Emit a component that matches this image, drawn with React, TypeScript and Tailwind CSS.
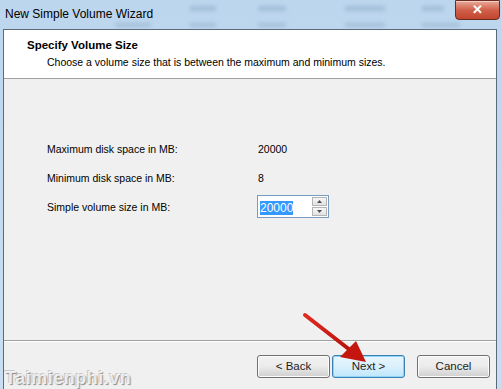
import React from 'react';

const font = { fontFamily: '"Liberation Sans", Arial, sans-serif' };

function WinButton({ label, focused }: { label: string; focused?: boolean }) {
  return (
    <button
      className={
        'w-[73px] h-[23px] rounded-[3px] border text-[11.5px] text-[#1e1e1e] bg-gradient-to-b ' +
        (focused
          ? 'border-[#3c7fb1] from-[#eaf6fd] via-[#d9f0fc] to-[#bee6fd] shadow-[inset_0_0_0_1px_#8fd4f6]'
          : 'border-[#707070] from-[#f2f2f2] via-[#ebebeb] to-[#cfcfcf] shadow-[inset_0_0_0_1px_#fcfcfc]')
      }
    >
      {label}
    </button>
  );
}

export default function App() {
  const rows = [
    { label: 'Maximum disk space in MB:', value: '20000' },
    { label: 'Minimum disk space in MB:', value: '8' },
  ];

  return (
    <div
      className="relative w-[501px] h-[389px] overflow-hidden flex flex-col bg-gradient-to-b from-[#bcd6ee] to-[#c9def2]"
      style={font}
    >
      {/* title bar */}
      <div className="relative h-[29px] flex items-start justify-between">
        <div className="absolute inset-0 blur-[2px] opacity-40">
          <div className="absolute left-[190px] top-[6px] w-[26px] h-[5px] bg-[#7a98b4]" />
          <div className="absolute left-[258px] top-[6px] w-[28px] h-[5px] bg-[#7a98b4]" />
          <div className="absolute left-[345px] top-[6px] w-[40px] h-[5px] bg-[#7a98b4]" />
          <div className="absolute left-[422px] top-[6px] w-[22px] h-[5px] bg-[#7a98b4]" />
          <div className="absolute left-[115px] top-[23px] w-[36px] h-[4px] bg-[#7a98b4]" />
          <div className="absolute left-[190px] top-[23px] w-[26px] h-[4px] bg-[#7a98b4]" />
          <div className="absolute left-[258px] top-[23px] w-[28px] h-[4px] bg-[#7a98b4]" />
          <div className="absolute left-[345px] top-[23px] w-[40px] h-[4px] bg-[#7a98b4]" />
          <div className="absolute left-[422px] top-[23px] w-[38px] h-[4px] bg-[#7a98b4]" />
        </div>
        <span className="relative pl-[5px] pt-[5px] text-[12px] text-black">New Simple Volume Wizard</span>
        <div className="relative mr-[1px] w-[45px] h-[20px] rounded-b-[4px] border border-[#6b2a22] bg-gradient-to-b from-[#e9a99a] via-[#d0604a] to-[#c2452e] flex items-center justify-center text-white text-[13px] font-bold shadow-[inset_0_1px_0_#f5cfc6]">
          ✕
        </div>
      </div>

      {/* client area */}
      <div className="flex-1 ml-[3px] mr-[4px] border-l border-r border-t border-[#5b6b7b] flex flex-col bg-[#f0f0f0]">
        <div className="h-[49px] bg-white border-b border-[#a0a0a0] pl-[23px] pt-[7px]">
          <div className="text-[11.5px] font-bold text-black leading-[17px]">Specify Volume Size</div>
          <div className="pl-[20px] text-[10.5px] text-black leading-[16px]">
            Choose a volume size that is between the maximum and minimum sizes.
          </div>
        </div>

        <div className="h-[261px] pl-[43px] pt-[60px] text-[10.5px] text-black">
          {rows.map((r) => (
            <div key={r.label} className="flex h-[29px] items-start pt-[3px]">
              <span className="w-[211px]">{r.label}</span>
              <span>{r.value}</span>
            </div>
          ))}
          <div className="flex h-[29px] items-start pt-[3px]">
            <span className="w-[210px]">Simple volume size in MB:</span>
            <div className="-mt-[5px] flex h-[23px] w-[72px] border border-[#7a9cc3] bg-white">
              <div className="flex-1 pl-[2px] pt-[3px] text-[12px]">
                <span className="bg-[#3399ff] text-white leading-[15px]">20000</span>
              </div>
              <div className="flex w-[16px] flex-col justify-center gap-[1px] pr-[1px]">
                <div className="flex h-[9px] items-center justify-center border border-[#b4b4b4] bg-gradient-to-b from-[#f6f6f6] to-[#e2e2e2]">
                  <svg width="5" height="3" viewBox="0 0 5 3"><path d="M2.5 0L5 3H0z" fill="#4d4d4d" /></svg>
                </div>
                <div className="flex h-[9px] items-center justify-center border border-[#b4b4b4] bg-gradient-to-b from-[#f6f6f6] to-[#e2e2e2]">
                  <svg width="5" height="3" viewBox="0 0 5 3"><path d="M0 0H5L2.5 3z" fill="#4d4d4d" /></svg>
                </div>
              </div>
            </div>
          </div>
        </div>

        <div className="flex-1 border-t border-[#a0a0a0] shadow-[inset_0_1px_0_#ffffff] flex items-start pt-[14px] pl-[253px]">
          <WinButton label="< Back" />
          <div className="w-[2px]" />
          <WinButton label="Next >" focused />
          <div className="w-[12px]" />
          <WinButton label="Cancel" />
        </div>
      </div>

      {/* annotation arrow */}
      <svg className="absolute left-0 top-0 pointer-events-none" width="501" height="389">
        <defs>
          <linearGradient id="arr" x1="0" y1="0" x2="1" y2="1">
            <stop offset="0" stopColor="#e02a20" />
            <stop offset="1" stopColor="#b8120c" />
          </linearGradient>
        </defs>
        <line x1="305" y1="315" x2="350" y2="350" stroke="url(#arr)" strokeWidth="4" strokeLinecap="round" />
        <path d="M366 362 L340 357 L356 341 Z" fill="#c4160e" />
      </svg>

      {/* watermark */}
      <div
        className="absolute left-[5px] top-[365px] text-[18px] font-bold tracking-[0.5px] text-white/80"
        style={{ textShadow: '1px 1px 1px #8a8a8a, -1px -1px 0 #c8c8c8' }}
      >
        Taimienphi.vn
      </div>
    </div>
  );
}
